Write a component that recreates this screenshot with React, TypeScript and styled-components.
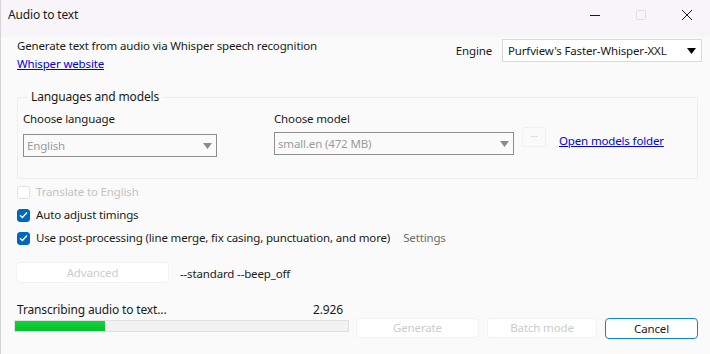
import * as React from 'react';
import styled, { createGlobalStyle, css } from 'styled-components';

const Colors = {
  title: '#f8f5fa',
  background: '#fafafa',
  text: '#1a1a1a',
  disabled: '#c6c2c4',
  link: '#0000ee',
  accent: '#0067c0',
};

const GlobalStyle = createGlobalStyle`
  html, body { margin: 0; padding: 0; }
  body {
    width: 710px;
    height: 354px;
    overflow: hidden;
    background: ${Colors.background};
    font-family: "Noto Sans", "Open Sans", sans-serif;
    font-size: 11.5px;
    letter-spacing: -0.15px;
    line-height: 16px;
    color: ${Colors.text};
  }
`;

const Window = styled.div`
  width: 710px;
  height: 354px;
  display: flex;
  flex-direction: column;
  background: ${Colors.background};
  border-left: 1px solid #d4d4d4;
  box-sizing: border-box;
`;

const TitleBar = styled.div`
  height: 37px;
  flex: none;
  display: flex;
  align-items: flex-start;
  background: ${Colors.title};
  padding-left: 7px;
`;

const TitleText = styled.div`
  flex: 1;
  font-size: 12px;
  margin-top: 7px;
`;

const Caption = styled.div`
  width: 46px;
  height: 30px;
  display: flex;
  align-items: center;
  justify-content: center;
`;

const Body = styled.div`
  flex: 1;
  display: flex;
  flex-direction: column;
  padding: 1px 8px 0 15px;
`;

const HeaderRow = styled.div`
  display: flex;
  justify-content: space-between;
  align-items: flex-start;
`;

const Intro = styled.div`
  display: flex;
  flex-direction: column;
  gap: 2px;
  padding-left: 1px;
`;

const Link = styled.a`
  color: ${Colors.link};
  text-decoration: underline;
  cursor: pointer;
`;

const EngineRow = styled.div`
  display: flex;
  align-items: center;
  gap: 10px;
  margin-top: 1px;
`;

const ComboBase = css`
  box-sizing: border-box;
  display: flex;
  align-items: center;
  justify-content: space-between;
`;

const EngineSelect = styled.div`
  ${ComboBase};
  width: 200px;
  height: 23px;
  background: #fff;
  border: 1px solid #d9d9d9;
  padding: 0 5px 0 5px;
`;

const GroupBox = styled.fieldset`
  margin: 17px 4px 0 1px;
  padding: 6px 0 21px 5px;
  border: 1px solid #eeeeee;
  border-radius: 2px;
  display: flex;
  gap: 57px;
  align-items: flex-start;
`;

const GroupLegend = styled.legend`
  padding: 0 3px;
  margin-left: 5px;
  font-size: 12px;
`;

const Field = styled.div`
  display: flex;
  flex-direction: column;
`;

const Combo = styled.div<{ $width: number; $offset: number }>`
  ${ComboBase};
  width: ${p => p.$width}px;
  height: 23px;
  margin-top: ${p => p.$offset}px;
  border: 1px solid #8e8e8e;
  background: ${Colors.background};
  color: #9a9a9a;
  padding: 0 4px 0 3px;
`;

const ModelRow = styled.div`
  display: flex;
  align-items: flex-start;
`;

const DotsButton = styled.div`
  box-sizing: border-box;
  width: 24px;
  height: 20px;
  margin: 0 13px 0 8px;
  border: 1px solid #f0f0f0;
  border-radius: 3px;
  font-size: 9px;
  color: #c8c8c8;
  display: flex;
  align-items: center;
  justify-content: center;
`;

const FolderLink = styled(Link)`
  margin-top: 6px;
`;

const Options = styled.div`
  display: flex;
  flex-direction: column;
  gap: 5px;
  margin-top: 4px;
`;

const CheckRow = styled.label<{ $disabled?: boolean }>`
  display: flex;
  align-items: center;
  height: 18px;
  gap: 6px;
  color: ${p => (p.$disabled ? Colors.disabled : Colors.text)};
`;

const Box = styled.span<{ $checked?: boolean }>`
  width: 13px;
  height: 13px;
  box-sizing: border-box;
  border-radius: 3px;
  margin-left: 1px;
  display: flex;
  align-items: center;
  justify-content: center;
  background: ${p => (p.$checked ? Colors.accent : '#fff')};
  border: 1px solid ${p => (p.$checked ? Colors.accent : '#e2e2e2')};
`;

const SettingsLabel = styled.span`
  color: #6d6d6d;
  margin-left: 7px;
`;

const AdvancedRow = styled.div`
  display: flex;
  align-items: center;
  margin-top: 15px;
  gap: 11px;
`;

const Button = styled.div<{ $width: number; $primary?: boolean; $disabled?: boolean }>`
  box-sizing: border-box;
  width: ${p => p.$width}px;
  height: ${p => (p.$primary ? 21 : 20)}px;
  display: flex;
  align-items: center;
  justify-content: center;
  border-radius: 4px;
  background: #fff;
  border: 1px solid ${p => (p.$primary ? '#0a84e8' : '#f2f2f2')};
  color: ${p => (p.$disabled ? '#cccccc' : Colors.text)};
`;

const AdvancedButton = styled(Button)`
  height: 21px;
`;

const ParamText = styled.span`
  margin-top: 3px;
`;

const Footer = styled.div`
  display: flex;
  align-items: flex-start;
  margin-top: 19px;
  margin-left: -2px;
  gap: 7px;
`;

const ProgressArea = styled.div`
  display: flex;
  flex-direction: column;
  width: 335px;
`;

const ProgressLabels = styled.div`
  display: flex;
  justify-content: space-between;
  padding: 0 6px 0 3px;
  font-size: 12px;
`;

const Track = styled.div`
  box-sizing: border-box;
  height: 12px;
  border: 1px solid #e0e0e0;
  background: #f2f2f2;
  overflow: hidden;
  margin-top: 2px;
`;

const Fill = styled.div`
  height: 100%;
  background: linear-gradient(#12d23c, #06c12f);
`;

const Buttons = styled.div`
  display: flex;
  gap: 8px;
  padding-top: 16px;
`;

const Arrow = ({ color = '#000' }: { color?: string }) => (
  <svg width="9" height="6" viewBox="0 0 9 6"><path d="M0 0h9L4.5 6z" fill={color} /></svg>
);

const Check = () => (
  <svg width="9" height="8" viewBox="0 0 9 8"><path d="M1 4.2 3.4 6.5 8 1.5" stroke="#fff" strokeWidth="1.3" fill="none" /></svg>
);

export default function App() {
  const progress = 27;
  return (
    <Window>
      <GlobalStyle />
      <TitleBar>
        <TitleText>Audio to text</TitleText>
        <Caption>
          <svg width="10" height="10" viewBox="0 0 10 10"><path d="M0 5.5h10" stroke="#1a1a1a" strokeWidth="1" /></svg>
        </Caption>
        <Caption>
          <svg width="10" height="10" viewBox="0 0 10 10"><rect x="0.5" y="0.5" width="9" height="9" rx="1" stroke="#e0dde2" fill="none" /></svg>
        </Caption>
        <Caption>
          <svg width="10" height="10" viewBox="0 0 10 10"><path d="M0 0l10 10M10 0L0 10" stroke="#1a1a1a" strokeWidth="1" /></svg>
        </Caption>
      </TitleBar>
      <Body>
        <HeaderRow>
          <Intro>
            <span>Generate text from audio via Whisper speech recognition</span>
            <Link>Whisper website</Link>
          </Intro>
          <EngineRow>
            <span>Engine</span>
            <EngineSelect>
              <span>Purfview's Faster-Whisper-XXL</span>
              <Arrow />
            </EngineSelect>
          </EngineRow>
        </HeaderRow>

        <GroupBox>
          <GroupLegend>Languages and models</GroupLegend>
          <Field>
            <span>Choose language</span>
            <Combo $width={194} $offset={7}>
              <span>English</span>
              <Arrow color="#8a8a8a" />
            </Combo>
          </Field>
          <Field>
            <span>Choose model</span>
            <ModelRow>
              <Combo $width={240} $offset={5}>
                <span>small.en (472 MB)</span>
                <Arrow color="#8a8a8a" />
              </Combo>
              <DotsButton>···</DotsButton>
              <FolderLink>Open models folder</FolderLink>
            </ModelRow>
          </Field>
        </GroupBox>

        <Options>
          <CheckRow $disabled>
            <Box />
            Translate to English
          </CheckRow>
          <CheckRow>
            <Box $checked><Check /></Box>
            Auto adjust timings
          </CheckRow>
          <CheckRow>
            <Box $checked><Check /></Box>
            Use post-processing (line merge, fix casing, punctuation, and more)
            <SettingsLabel>Settings</SettingsLabel>
          </CheckRow>
        </Options>

        <AdvancedRow>
          <AdvancedButton $width={153} $disabled>Advanced</AdvancedButton>
          <ParamText>--standard --beep_off</ParamText>
        </AdvancedRow>

        <Footer>
          <ProgressArea>
            <ProgressLabels>
              <span>Transcribing audio to text...</span>
              <span>2.926</span>
            </ProgressLabels>
            <Track>
              <Fill style={{ width: `${progress}%` }} />
            </Track>
          </ProgressArea>
          <Buttons>
            <Button $width={123} $disabled>Generate</Button>
            <Button $width={110} $disabled>Batch mode</Button>
            <Button $width={93} $primary>Cancel</Button>
          </Buttons>
        </Footer>
      </Body>
    </Window>
  );
}
